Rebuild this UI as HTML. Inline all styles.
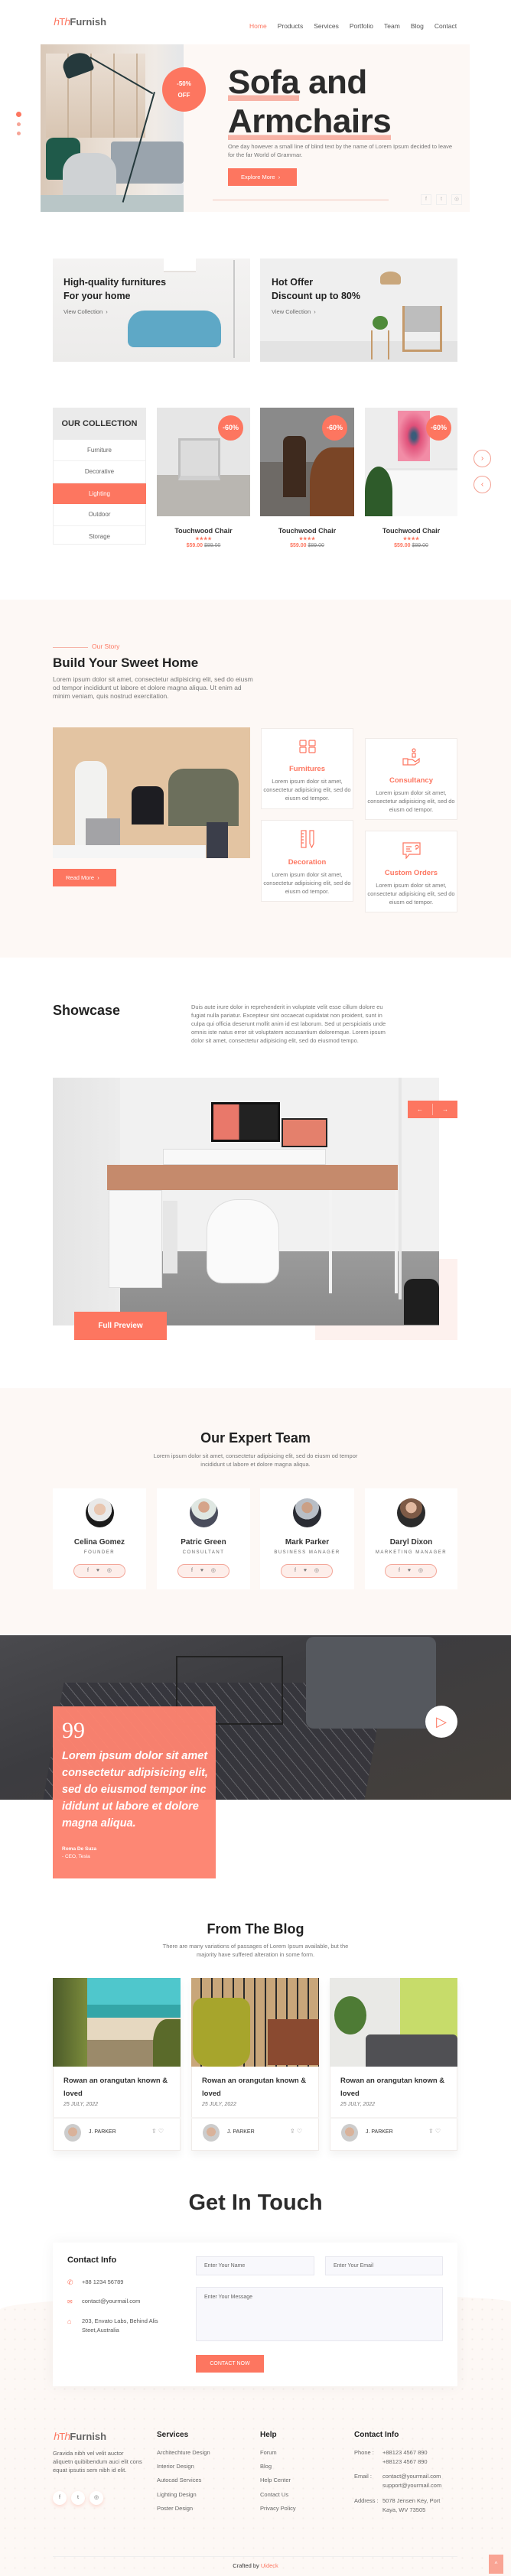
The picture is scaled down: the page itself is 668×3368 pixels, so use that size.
<!DOCTYPE html>
<html><head><meta charset="utf-8">
<style>
*{margin:0;padding:0;box-sizing:border-box}
body{width:668px;height:3368px;position:relative;background:#fff;font-family:"Liberation Sans",Arial,sans-serif;color:#222;overflow:hidden}
.a{position:absolute}
.c{color:#fd7660}
.bg{background:#fd7660}
.t{font-size:8.5px;color:#777;line-height:11px}
.h{font-weight:bold;color:#222}
.ctr{text-align:center}
.card{background:#fff;border:1px solid #f0ebe8}
.nav span{margin-left:14px;font-size:8.5px;color:#555}
</style></head><body>

<!-- header -->
<div class="a" style="left:70px;top:21px;font-size:13px;font-weight:bold;color:#666"><span class="c" style="font-weight:normal;letter-spacing:-1px">ℎTℎ</span>Furnish</div>
<div class="a nav" style="left:312px;top:24px"><span class="c" style="color:#fd7660">Home</span><span>Products</span><span>Services</span><span>Portfolio</span><span>Team</span><span>Blog</span><span>Contact</span></div>

<!-- hero -->
<div class="a" style="left:53px;top:58px;width:561px;height:219px;background:#fdf8f5"></div>
<div class="a" style="left:53px;top:58px;width:187px;height:219px;overflow:hidden;background:linear-gradient(90deg,#d9c8b8 0%,#e8ddd2 40%,#f0ebe6 80%,#e4e6e8 100%)">
<div class="a" style="left:7px;top:12px;width:130px;height:110px;background:repeating-linear-gradient(90deg,transparent 0 28px,#c9b39c 28px 30px),linear-gradient(#eadfd4,#d8c5b2)"></div>
<div class="a" style="left:92px;top:127px;width:95px;height:55px;background:#9aa4ad;border-radius:4px"></div>
<div class="a" style="left:7px;top:122px;width:45px;height:55px;background:#1f5a4a;border-radius:10px 10px 4px 4px"></div>
<div class="a" style="left:29px;top:142px;width:70px;height:75px;background:#cfd2d4;border-radius:25px 25px 6px 6px"></div>
<div class="a" style="left:0;top:197px;width:187px;height:22px;background:#b9c6c7"></div>
<div class="a" style="left:29px;top:12px;width:38px;height:28px;background:#25393c;border-radius:50% 50% 4px 4px;transform:rotate(-20deg)"></div>
<div class="a" style="left:65px;top:16px;width:95px;height:2px;background:#25393c;transform:rotate(30deg);transform-origin:0 0"></div>
<div class="a" style="left:148px;top:62px;width:2px;height:150px;background:#25393c;transform:rotate(16deg);transform-origin:0 0"></div>
</div>
<div class="a bg ctr" style="left:212px;top:88px;width:57px;height:58px;border-radius:50%;color:#fff;font-size:8px;font-weight:bold;line-height:15px;padding-top:14px">-50%<br>OFF</div>
<div class="a" style="left:298px;top:82px;font-size:44px;font-weight:bold;line-height:51px;color:#2b2b2b;letter-spacing:-0.5px">
<span style="background:linear-gradient(transparent 85%,#f7b3a6 85%)">Sofa</span> and<br><span style="background:linear-gradient(transparent 87%,#f7b3a6 87%)">Armchairs</span></div>
<div class="a t" style="left:298px;top:186px;font-size:7.5px;width:300px">One day however a small line of blind text by the name of Lorem Ipsum decided to leave for the far World of Grammar.</div>
<div class="a bg" style="left:298px;top:220px;width:90px;height:23px;color:#fff;font-size:7.5px;line-height:23px;padding-left:17px">Explore More &nbsp;›</div>
<div class="a" style="left:278px;top:261px;width:230px;height:1px;background:#f2c3b8"></div>
<div class="a" style="left:550px;top:254px;width:14px;height:14px;border:1px solid #eee;font-size:7px;color:#bbb;text-align:center;line-height:12px">f</div>
<div class="a" style="left:570px;top:254px;width:14px;height:14px;border:1px solid #eee;font-size:7px;color:#bbb;text-align:center;line-height:12px">t</div>
<div class="a" style="left:590px;top:254px;width:14px;height:14px;border:1px solid #eee;font-size:7px;color:#bbb;text-align:center;line-height:12px">◎</div>
<div class="a bg" style="left:21px;top:146px;width:7px;height:7px;border-radius:50%"></div>
<div class="a" style="left:22px;top:160px;width:5px;height:5px;border-radius:50%;background:#f6a496"></div>
<div class="a" style="left:22px;top:172px;width:5px;height:5px;border-radius:50%;background:#f6a496"></div>

<!-- banners -->
<div class="a" style="left:69px;top:338px;width:258px;height:135px;background:linear-gradient(#f4f3f2,#ecebea)"></div>
<div class="a" style="left:167px;top:406px;width:122px;height:48px;background:#5ea8c6;border-radius:22px 22px 8px 8px"></div>
<div class="a" style="left:214px;top:338px;width:42px;height:18px;background:#fff;border-bottom:2px solid #e6e2de"></div>
<div class="a" style="left:305px;top:340px;width:2px;height:128px;background:#c9c9c9"></div>
<div class="a h" style="left:83px;top:360px;font-size:12.5px;line-height:18px">High-quality furnitures<br>For your home</div>
<div class="a" style="left:83px;top:403px;font-size:7.5px;color:#666">View Collection &nbsp;›</div>
<div class="a" style="left:340px;top:338px;width:258px;height:135px;background:linear-gradient(#efefef 80%,#e3e3e3 80%)"></div>
<div class="a" style="left:497px;top:355px;width:27px;height:17px;background:#c9a77c;border-radius:50% 50% 3px 3px"></div>
<div class="a" style="left:526px;top:400px;width:52px;height:60px;border:3px solid #c59a6b;border-top:none;background:linear-gradient(#bdbdbd 60%,transparent 60%)"></div>
<div class="a" style="left:485px;top:432px;width:24px;height:38px;border-left:2px solid #c59a6b;border-right:2px solid #c59a6b"></div>
<div class="a" style="left:487px;top:413px;width:20px;height:18px;background:#4f8b3b;border-radius:50%"></div>
<div class="a h" style="left:355px;top:360px;font-size:12.5px;line-height:18px">Hot Offer<br>Discount up to 80%</div>
<div class="a" style="left:355px;top:403px;font-size:7.5px;color:#666">View Collection &nbsp;›</div>

<!-- collection -->
<div class="a" style="left:69px;top:533px;width:122px;height:179px;border:1px solid #eee;background:#fff"></div>
<div class="a h ctr" style="left:69px;top:533px;width:122px;height:42px;background:#ebebeb;font-size:11px;line-height:42px;color:#333">OUR COLLECTION</div>
<div class="a ctr" style="left:69px;top:575px;width:122px;font-size:8px;color:#666;line-height:27.4px">
<div style="border-bottom:1px solid #f0f0f0">Furniture</div><div style="border-bottom:1px solid #f0f0f0">Decorative</div><div class="bg" style="color:#fff">Lighting</div><div style="border-bottom:1px solid #f0f0f0">Outdoor</div><div>Storage</div></div>

<div class="a" style="left:205px;top:533px;width:122px;height:142px;background:linear-gradient(#e6e6e6 0 62%,#b9b6b1 62%)"></div>
<div class="a" style="left:233px;top:573px;width:55px;height:55px;border:3px solid #bfbfbf;border-bottom:6px solid #d0d0d0;background:#dcdcdc"></div>
<div class="a" style="left:340px;top:533px;width:123px;height:142px;background:linear-gradient(#8a8a8a 0 50%,#6e6a66 50%)"></div>
<div class="a" style="left:405px;top:585px;width:58px;height:90px;background:#7a4526;border-radius:50% 0 0 0"></div>
<div class="a" style="left:370px;top:570px;width:30px;height:80px;background:#3e2a1e;border-radius:8px 8px 0 0"></div>
<div class="a" style="left:477px;top:533px;width:121px;height:142px;background:#ededed"></div>
<div class="a" style="left:520px;top:537px;width:42px;height:66px;background:radial-gradient(#3a5c7a 10%,#e0517a 30%,#f28ca6 70%)"></div>
<div class="a" style="left:505px;top:612px;width:93px;height:63px;background:#f8f8f8;border-top:3px solid #e6e6e6"></div>
<div class="a" style="left:477px;top:610px;width:36px;height:65px;background:#2e5b2a;border-radius:50% 50% 0 0"></div>
<div class="a bg ctr" style="left:285px;top:543px;width:33px;height:33px;border-radius:50%;color:#fff;font-size:9px;font-weight:bold;line-height:33px">-60%</div>
<div class="a bg ctr" style="left:421px;top:543px;width:33px;height:33px;border-radius:50%;color:#fff;font-size:9px;font-weight:bold;line-height:33px">-60%</div>
<div class="a bg ctr" style="left:557px;top:543px;width:33px;height:33px;border-radius:50%;color:#fff;font-size:9px;font-weight:bold;line-height:33px">-60%</div>
<div class="a ctr" style="left:205px;top:689px;width:122px;font-size:9px;font-weight:bold;color:#333">Touchwood Chair<div class="c" style="font-size:6px;line-height:10px;margin-top:1px">★★★★</div><div style="font-size:7px"><span class="c">$59.00</span> <s style="color:#888;font-weight:normal">$89.00</s></div></div>
<div class="a ctr" style="left:340px;top:689px;width:123px;font-size:9px;font-weight:bold;color:#333">Touchwood Chair<div class="c" style="font-size:6px;line-height:10px;margin-top:1px">★★★★</div><div style="font-size:7px"><span class="c">$59.00</span> <s style="color:#888;font-weight:normal">$89.00</s></div></div>
<div class="a ctr" style="left:477px;top:689px;width:121px;font-size:9px;font-weight:bold;color:#333">Touchwood Chair<div class="c" style="font-size:6px;line-height:10px;margin-top:1px">★★★★</div><div style="font-size:7px"><span class="c">$59.00</span> <s style="color:#888;font-weight:normal">$89.00</s></div></div>
<div class="a ctr c" style="left:619px;top:588px;width:23px;height:23px;border:1px solid #f3a092;border-radius:50%;font-size:10px;line-height:21px">›</div>
<div class="a ctr c" style="left:619px;top:622px;width:23px;height:23px;border:1px solid #f3a092;border-radius:50%;font-size:10px;line-height:21px">‹</div>

<!-- story -->
<div class="a" style="left:0;top:784px;width:668px;height:468px;background:#fdf8f5"></div>
<div class="a" style="left:69px;top:846px;width:46px;height:1px;background:#f6b3a7"></div>
<div class="a c" style="left:120px;top:840px;font-size:8.5px">Our Story</div>
<div class="a h" style="left:69px;top:857px;font-size:17px">Build Your Sweet Home</div>
<div class="a t" style="left:69px;top:883px;width:265px">Lorem ipsum dolor sit amet, consectetur adipisicing elit, sed do eiusm od tempor incididunt ut labore et dolore magna aliqua. Ut enim ad minim veniam, quis nostrud exercitation.</div>
<div class="a" style="left:69px;top:951px;width:258px;height:171px;background:#e3c4a2"></div>
<div class="a" style="left:69px;top:1105px;width:200px;height:17px;background:#f5f5f5"></div>
<div class="a" style="left:98px;top:995px;width:42px;height:110px;background:#f2f2f0;border-radius:14px 14px 0 0"></div>
<div class="a" style="left:172px;top:1028px;width:42px;height:50px;background:#1d1d22;border-radius:10px 10px 0 0"></div>
<div class="a" style="left:220px;top:1005px;width:92px;height:75px;background:#6c6f5c;border-radius:20px 20px 0 0"></div>
<div class="a" style="left:270px;top:1075px;width:28px;height:47px;background:#3b3e4a"></div>
<div class="a" style="left:112px;top:1070px;width:45px;height:35px;background:#a3a3a6"></div>
<div class="a bg" style="left:69px;top:1136px;width:83px;height:23px;color:#fff;font-size:7.5px;line-height:23px;padding-left:17px">Read More &nbsp;›</div>

<div class="a card ctr" style="left:341px;top:952px;width:121px;height:106px;padding-top:14px">
<svg width="22" height="18" viewBox="0 0 22 18" fill="none" stroke="#fd7660" stroke-width="1.2"><rect x="1" y="1" width="8" height="7" rx="1"/><rect x="13" y="1" width="8" height="7" rx="1"/><rect x="1" y="10" width="8" height="7" rx="1"/><rect x="13" y="10" width="8" height="7" rx="1"/></svg>
<div class="c" style="font-size:9.5px;font-weight:bold;margin:10px 0 5px">Furnitures</div><div class="t" style="font-size:7.5px;line-height:11px">Lorem ipsum dolor sit amet, consectetur adipisicing elit, sed do eiusm od tempor.</div></div>
<div class="a card ctr" style="left:341px;top:1072px;width:121px;height:107px;padding-top:12px">
<svg width="22" height="24" viewBox="0 0 22 24" fill="none" stroke="#fd7660" stroke-width="1.2"><rect x="3" y="1" width="6" height="22"/><path d="M3 5h3M3 9h3M3 13h3M3 17h3M14 1h5v17l-2.5 5-2.5-5z"/></svg>
<div class="c" style="font-size:9.5px;font-weight:bold;margin:8px 0 5px">Decoration</div><div class="t" style="font-size:7.5px;line-height:11px">Lorem ipsum dolor sit amet, consectetur adipisicing elit, sed do eiusm od tempor.</div></div>
<div class="a card ctr" style="left:477px;top:965px;width:121px;height:107px;padding-top:12px">
<svg width="24" height="24" viewBox="0 0 24 24" fill="none" stroke="#fd7660" stroke-width="1.2"><circle cx="15" cy="3" r="2"/><rect x="13" y="7" width="4" height="5"/><path d="M1 14h6v8H1zM7 15h6l4 3 5-4v4l-6 4H7"/></svg>
<div class="c" style="font-size:9.5px;font-weight:bold;margin:8px 0 5px">Consultancy</div><div class="t" style="font-size:7.5px;line-height:11px">Lorem ipsum dolor sit amet, consectetur adipisicing elit, sed do eiusm od tempor.</div></div>
<div class="a card ctr" style="left:477px;top:1086px;width:121px;height:107px;padding-top:14px">
<svg width="24" height="22" viewBox="0 0 24 22" fill="none" stroke="#fd7660" stroke-width="1.2"><path d="M1 1h22v15H9l-4 5v-5H1z M5 6h7M5 9h5M5 12h7M17 6a2 2 0 1 1 1 2v2"/></svg>
<div class="c" style="font-size:9.5px;font-weight:bold;margin:8px 0 5px">Custom Orders</div><div class="t" style="font-size:7.5px;line-height:11px">Lorem ipsum dolor sit amet, consectetur adipisicing elit, sed do eiusm od tempor.</div></div>

<!-- showcase -->
<div class="a h" style="left:69px;top:1311px;font-size:18px">Showcase</div>
<div class="a t" style="left:250px;top:1311px;width:265px;font-size:7.5px">Duis aute irure dolor in reprehenderit in voluptate velit esse cillum dolore eu fugiat nulla pariatur. Excepteur sint occaecat cupidatat non proident, sunt in culpa qui officia deserunt mollit anim id est laborum. Sed ut perspiciatis unde omnis iste natus error sit voluptatem accusantium doloremque. Lorem ipsum dolor sit amet, consectetur adipisicing elit, sed do eiusmod tempo.</div>
<div class="a" style="left:412px;top:1646px;width:186px;height:106px;background:#fdf1ee"></div>
<div class="a" style="left:69px;top:1409px;width:505px;height:324px;background:linear-gradient(#f1f1f1 0 70%,#9b9b9b 70%,#8a8a8a)"></div>
<div class="a" style="left:69px;top:1409px;width:88px;height:324px;background:linear-gradient(90deg,#e4e4e4,#ececec)"></div>
<div class="a" style="left:140px;top:1523px;width:380px;height:33px;background:#c58a6c"></div>
<div class="a" style="left:142px;top:1556px;width:70px;height:128px;background:#f7f7f7;border:1px solid #ddd"></div>
<div class="a" style="left:213px;top:1570px;width:19px;height:95px;background:#e6e6e6"></div>
<div class="a" style="left:213px;top:1502px;width:213px;height:21px;background:#f8f8f8;border:1px solid #ddd"></div>
<div class="a" style="left:276px;top:1441px;width:90px;height:52px;background:linear-gradient(90deg,#e9786a 40%,#222 40%);border:3px solid #111"></div>
<div class="a" style="left:368px;top:1462px;width:60px;height:38px;background:#e4806c;border:2px solid #222"></div>
<div class="a" style="left:270px;top:1568px;width:95px;height:110px;background:#fafafa;border-radius:40px 40px 20px 20px;border:1px solid #ddd"></div>
<div class="a" style="left:430px;top:1556px;width:90px;height:135px;border-left:4px solid #f3f3f3;border-right:4px solid #f3f3f3"></div>
<div class="a" style="left:528px;top:1672px;width:46px;height:60px;background:#1e1e1e;border-radius:12px 12px 0 0"></div>
<div class="a" style="left:521px;top:1409px;width:4px;height:290px;background:#e6e6e6"></div>
<div class="a bg" style="left:533px;top:1439px;width:65px;height:23px;color:#fff;font-size:8px;line-height:23px;display:flex"><span style="flex:1;text-align:center;border-right:1px solid #ffb0a3;margin:4px 0;line-height:15px">←</span><span style="flex:1;text-align:center;line-height:23px">→</span></div>
<div class="a bg ctr" style="left:97px;top:1715px;width:121px;height:37px;color:#fff;font-size:10px;font-weight:bold;line-height:37px">Full Preview</div>

<!-- team -->
<div class="a" style="left:0;top:1815px;width:668px;height:323px;background:#fdf8f5"></div>
<div class="a h ctr" style="left:0;top:1870px;width:668px;font-size:18px">Our Expert Team</div>
<div class="a t ctr" style="left:200px;top:1898px;width:268px;font-size:7.5px">Lorem ipsum dolor sit amet, consectetur adipisicing elit, sed do eiusm od tempor incididunt ut labore et dolore magna aliqua.</div>
<div class="a" style="left:69px;top:1946px;width:529px">
<div class="a" style="left:0;width:122px;height:132px;background:#fff"></div>
<div class="a" style="left:136px;width:122px;height:132px;background:#fff"></div>
<div class="a" style="left:271px;width:123px;height:132px;background:#fff"></div>
<div class="a" style="left:408px;width:121px;height:132px;background:#fff"></div>
</div>
<div class="a" style="left:112px;top:1959px;width:37px;height:38px;border-radius:50%;background:radial-gradient(circle at 50% 38%,#e8c6b0 0 25%,#e9e9e9 26% 52%,#1b1b1b 53%)"></div>
<div class="a" style="left:248px;top:1959px;width:37px;height:38px;border-radius:50%;background:radial-gradient(circle at 50% 30%,#d5a48a 0 22%,#dfe7e2 23% 50%,#4a4d5c 51%)"></div>
<div class="a" style="left:383px;top:1959px;width:37px;height:38px;border-radius:50%;background:radial-gradient(circle at 50% 32%,#caa086 0 22%,#b8bec6 23% 48%,#2a2c33 49%)"></div>
<div class="a" style="left:519px;top:1959px;width:37px;height:38px;border-radius:50%;background:radial-gradient(circle at 50% 32%,#e2b9a0 0 22%,#7d5a46 23% 45%,#2b2b2b 46%)"></div>
<div class="a ctr" style="left:69px;top:2011px;width:122px;font-size:10px;font-weight:bold;color:#333">Celina Gomez<div style="font-size:6px;font-weight:normal;color:#666;letter-spacing:1.5px;margin-top:5px">FOUNDER</div></div>
<div class="a ctr" style="left:205px;top:2011px;width:122px;font-size:10px;font-weight:bold;color:#333">Patric Green<div style="font-size:6px;font-weight:normal;color:#666;letter-spacing:1.5px;margin-top:5px">CONSULTANT</div></div>
<div class="a ctr" style="left:340px;top:2011px;width:123px;font-size:10px;font-weight:bold;color:#333">Mark Parker<div style="font-size:6px;font-weight:normal;color:#666;letter-spacing:1.5px;margin-top:5px">BUSINESS MANAGER</div></div>
<div class="a ctr" style="left:477px;top:2011px;width:121px;font-size:10px;font-weight:bold;color:#333">Daryl Dixon<div style="font-size:6px;font-weight:normal;color:#666;letter-spacing:1.5px;margin-top:5px">MARKETING MANAGER</div></div>
<div class="a ctr" style="left:96px;top:2045px;width:68px;height:18px;border:1px solid #f3a79a;border-radius:9px;background:#fdeeea;font-size:7px;color:#777;line-height:16px;word-spacing:8px">f ♥ ◎</div>
<div class="a ctr" style="left:232px;top:2045px;width:68px;height:18px;border:1px solid #f3a79a;border-radius:9px;background:#fdeeea;font-size:7px;color:#777;line-height:16px;word-spacing:8px">f ♥ ◎</div>
<div class="a ctr" style="left:367px;top:2045px;width:68px;height:18px;border:1px solid #f3a79a;border-radius:9px;background:#fdeeea;font-size:7px;color:#777;line-height:16px;word-spacing:8px">f ♥ ◎</div>
<div class="a ctr" style="left:503px;top:2045px;width:68px;height:18px;border:1px solid #f3a79a;border-radius:9px;background:#fdeeea;font-size:7px;color:#777;line-height:16px;word-spacing:8px">f ♥ ◎</div>

<!-- testimonial -->
<div class="a" style="left:0;top:2138px;width:668px;height:215px;background:linear-gradient(160deg,#4a4a4e 0%,#3c3c40 40%,#45403b 100%)"></div>
<div class="a" style="left:70px;top:2200px;width:420px;height:153px;background:repeating-linear-gradient(45deg,#35353c 0 9px,#6a6a70 9px 10px),#333;opacity:.8;transform:skewX(-10deg)"></div>
<div class="a" style="left:400px;top:2140px;width:170px;height:120px;background:#55585e;border-radius:10px"></div>
<div class="a" style="left:230px;top:2165px;width:140px;height:90px;border:2px solid #222"></div>
<div class="a" style="left:69px;top:2231px;width:213px;height:225px;background:#fd8370;opacity:.97"></div>
<div class="a" style="left:81px;top:2248px;font-size:30px;color:#fff;font-family:'Liberation Serif',serif;line-height:30px">99</div>
<div class="a" style="left:81px;top:2285px;width:200px;font-size:14.5px;line-height:22px;color:#fff;font-style:italic;font-weight:bold">Lorem ipsum dolor sit amet consectetur adipisicing elit, sed do eiusmod tempor inc ididunt ut labore et dolore magna aliqua.</div>
<div class="a" style="left:81px;top:2413px;font-size:6.5px;color:#fff;font-weight:bold;line-height:10px">Roma De Suza<br><span style="font-weight:normal">- CEO, Tesla</span></div>
<div class="a ctr" style="left:556px;top:2230px;width:42px;height:42px;border-radius:50%;background:#fff;color:#fd7660;font-size:18px;line-height:42px">▷</div>

<!-- blog -->
<div class="a h ctr" style="left:0;top:2512px;width:668px;font-size:18px">From The Blog</div>
<div class="a t ctr" style="left:200px;top:2539px;width:268px;font-size:7.5px">There are many variations of passages of Lorem Ipsum available, but the majority have suffered alteration in some form.</div>
<div class="a card" style="left:69px;top:2586px;width:167px;height:226px;box-shadow:0 6px 10px rgba(0,0,0,.05)"></div>
<div class="a card" style="left:250px;top:2586px;width:167px;height:226px;box-shadow:0 6px 10px rgba(0,0,0,.05)"></div>
<div class="a card" style="left:431px;top:2586px;width:167px;height:226px;box-shadow:0 6px 10px rgba(0,0,0,.05)"></div>
<div class="a" style="left:69px;top:2586px;width:167px;height:116px;background:linear-gradient(#4fc7cc 0 30%,#34a6a8 30% 45%,#e6d8c0 45% 70%,#9b8a6a 70%)"></div>
<div class="a" style="left:69px;top:2586px;width:45px;height:116px;background:linear-gradient(90deg,#4b5a2a,#7b8b3b)"></div>
<div class="a" style="left:200px;top:2640px;width:36px;height:62px;background:#5a6a2a;border-radius:50% 0 0 0"></div>
<div class="a" style="left:250px;top:2586px;width:167px;height:116px;background:repeating-linear-gradient(90deg,#c8a67a 0 12px,#2a2a2a 12px 14px)"></div>
<div class="a" style="left:252px;top:2612px;width:75px;height:90px;background:#a7a52c;border-radius:14px 14px 20px 20px"></div>
<div class="a" style="left:350px;top:2640px;width:67px;height:60px;background:#8a4a30"></div>
<div class="a" style="left:431px;top:2586px;width:167px;height:116px;background:linear-gradient(90deg,#e9e9e6 0 55%,#c7dc6a 55%)"></div>
<div class="a" style="left:478px;top:2660px;width:120px;height:42px;background:#505054;border-radius:6px 6px 0 0"></div>
<div class="a" style="left:437px;top:2610px;width:42px;height:50px;background:#4e7b35;border-radius:50%"></div>
<div class="a h" style="left:83px;top:2712px;font-size:9.5px;line-height:17px;width:140px;color:#333">Rowan an orangutan known &amp; loved<div style="font-size:7px;font-style:italic;font-weight:normal;color:#777;line-height:12px">25 JULY, 2022</div></div>
<div class="a h" style="left:264px;top:2712px;font-size:9.5px;line-height:17px;width:140px;color:#333">Rowan an orangutan known &amp; loved<div style="font-size:7px;font-style:italic;font-weight:normal;color:#777;line-height:12px">25 JULY, 2022</div></div>
<div class="a h" style="left:445px;top:2712px;font-size:9.5px;line-height:17px;width:140px;color:#333">Rowan an orangutan known &amp; loved<div style="font-size:7px;font-style:italic;font-weight:normal;color:#777;line-height:12px">25 JULY, 2022</div></div>
<div class="a" style="left:69px;top:2768px;width:167px;height:2px;background:#f5f3f2"></div>
<div class="a" style="left:250px;top:2768px;width:167px;height:2px;background:#f5f3f2"></div>
<div class="a" style="left:431px;top:2768px;width:167px;height:2px;background:#f5f3f2"></div>
<div class="a" style="left:84px;top:2777px;width:22px;height:23px;border-radius:50%;background:radial-gradient(circle at 50% 45%,#d9b29a 0 35%,#ccc 36%)"></div>
<div class="a" style="left:265px;top:2777px;width:22px;height:23px;border-radius:50%;background:radial-gradient(circle at 50% 45%,#d9b29a 0 35%,#ccc 36%)"></div>
<div class="a" style="left:446px;top:2777px;width:22px;height:23px;border-radius:50%;background:radial-gradient(circle at 50% 45%,#d9b29a 0 35%,#ccc 36%)"></div>
<div class="a" style="left:116px;top:2784px;font-size:7px;color:#333">J. PARKER</div>
<div class="a" style="left:297px;top:2784px;font-size:7px;color:#333">J. PARKER</div>
<div class="a" style="left:478px;top:2784px;font-size:7px;color:#333">J. PARKER</div>
<div class="a" style="left:198px;top:2782px;font-size:8px;color:#999">⇪ ♡</div>
<div class="a" style="left:379px;top:2782px;font-size:8px;color:#999">⇪ ♡</div>
<div class="a" style="left:560px;top:2782px;font-size:8px;color:#999">⇪ ♡</div>

<!-- contact -->
<div class="a" style="left:0;top:3000px;width:668px;height:368px;background:#fdf8f5;background-image:radial-gradient(#f3ece8 1px,transparent 1.3px);background-size:13px 13px;border-radius:60% 40% 0 0/20px 10px 0 0"></div>
<div class="a h ctr" style="left:0;top:2864px;width:668px;font-size:29px;color:#2b2b2b">Get In Touch</div>
<div class="a" style="left:69px;top:2932px;width:529px;height:188px;background:#fff;box-shadow:0 0 18px rgba(0,0,0,.05)"></div>
<div class="a h" style="left:88px;top:2949px;font-size:11px">Contact Info</div>
<div class="a c" style="left:88px;top:2979px;font-size:9px">✆</div>
<div class="a c" style="left:88px;top:3005px;font-size:8px">✉</div>
<div class="a c" style="left:88px;top:3030px;font-size:9px">⌂</div>
<div class="a" style="left:107px;top:2979px;font-size:7.5px;color:#555">+88 1234 56789</div>
<div class="a" style="left:107px;top:3004px;font-size:7.5px;color:#555">contact@yourmail.com</div>
<div class="a" style="left:107px;top:3029px;font-size:7.5px;color:#555;line-height:11.5px">203, Envato Labs, Behind Alis<br>Steet,Australia</div>
<div class="a" style="left:256px;top:2950px;width:155px;height:25px;background:#f8f8fc;border:1px solid #e8e8ef;font-size:7px;color:#666;padding:8px 10px">Enter Your Name</div>
<div class="a" style="left:425px;top:2950px;width:154px;height:25px;background:#f8f8fc;border:1px solid #e8e8ef;font-size:7px;color:#666;padding:8px 10px">Enter Your Email</div>
<div class="a" style="left:256px;top:2990px;width:323px;height:71px;background:#f8f8fc;border:1px solid #e8e8ef;font-size:7px;color:#666;padding:9px 10px">Enter Your Message</div>
<div class="a bg ctr" style="left:256px;top:3079px;width:89px;height:23px;color:#fff;font-size:7px;line-height:23px">CONTACT NOW</div>

<!-- footer -->
<div class="a" style="left:70px;top:3178px;font-size:13px;font-weight:bold;color:#666"><span class="c" style="font-weight:normal;letter-spacing:-1px">ℎTℎ</span>Furnish</div>
<div class="a t" style="left:69px;top:3202px;width:118px;font-size:7.5px;color:#666">Gravida nibh vel velit auctor aliquetn quibibendum auci elit cons equat ipsutis sem nibh id elit.</div>
<div class="a ctr" style="left:69px;top:3257px;width:18px;height:18px;border-radius:50%;background:#fff;box-shadow:0 2px 5px rgba(253,118,96,.25);font-size:7px;line-height:18px;color:#666">f</div>
<div class="a ctr" style="left:93px;top:3257px;width:18px;height:18px;border-radius:50%;background:#fff;box-shadow:0 2px 5px rgba(253,118,96,.25);font-size:7px;line-height:18px;color:#666">t</div>
<div class="a ctr" style="left:117px;top:3257px;width:18px;height:18px;border-radius:50%;background:#fff;box-shadow:0 2px 5px rgba(253,118,96,.25);font-size:7px;line-height:18px;color:#666">◎</div>
<div class="a h" style="left:205px;top:3178px;font-size:10px">Services</div>
<div class="a" style="left:205px;top:3198px;font-size:7.5px;color:#666;line-height:18.2px">Architechture Design<br>Interior Design<br>Autocad Services<br>Lighting Design<br>Poster Design</div>
<div class="a h" style="left:340px;top:3178px;font-size:10px">Help</div>
<div class="a" style="left:340px;top:3198px;font-size:7.5px;color:#666;line-height:18.2px">Forum<br>Blog<br>Help Center<br>Contact Us<br>Privacy Policy</div>
<div class="a h" style="left:463px;top:3178px;font-size:10px">Contact Info</div>
<div class="a" style="left:463px;top:3201px;font-size:7.5px;color:#666;line-height:11.5px">Phone :</div>
<div class="a" style="left:500px;top:3201px;font-size:7.5px;color:#666;line-height:11.5px">+88123 4567 890<br>+88123 4567 890</div>
<div class="a" style="left:463px;top:3232px;font-size:7.5px;color:#666;line-height:11.5px">Email :</div>
<div class="a" style="left:500px;top:3232px;font-size:7.5px;color:#666;line-height:11.5px">contact@yourmail.com<br>support@yourmail.com</div>
<div class="a" style="left:463px;top:3264px;font-size:7.5px;color:#666;line-height:11.5px">Address :</div>
<div class="a" style="left:500px;top:3264px;font-size:7.5px;color:#666;line-height:11.5px">5078 Jensen Key, Port<br>Kaya, WV 73505</div>
<div class="a" style="left:69px;top:3342px;width:529px;height:1px;background:#eee"></div>
<div class="a ctr" style="left:0;top:3350px;width:668px;font-size:7.5px;color:#333">Crafted by <span class="c">Uideck</span></div>
<div class="a ctr" style="left:639px;top:3340px;width:19px;height:25px;background:#f9a494;color:#fff;font-size:8px;line-height:25px">^</div>
</body></html>
